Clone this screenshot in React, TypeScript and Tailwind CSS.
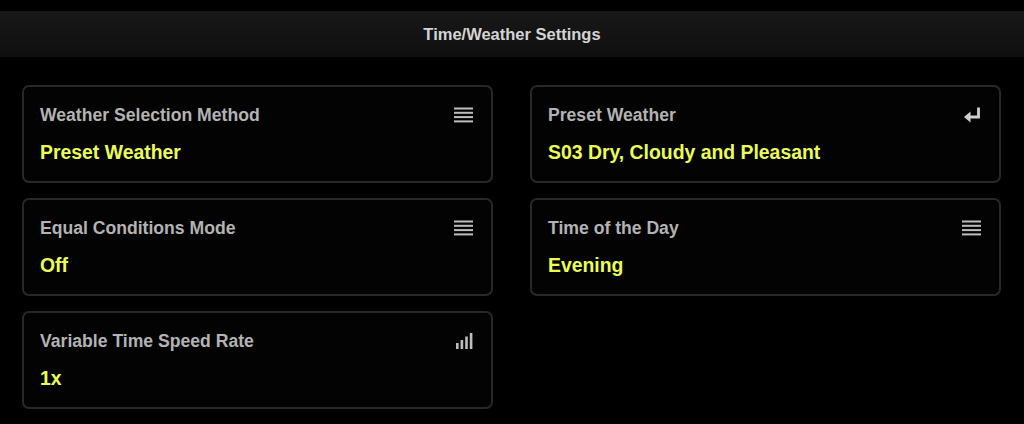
import type { ReactNode } from 'react'

type Icon = 'list' | 'enter' | 'bars'

const ROWS: { label: string; value: string; icon: Icon }[] = [
  { label: 'Weather Selection Method', value: 'Preset Weather', icon: 'list' },
  { label: 'Preset Weather', value: 'S03 Dry, Cloudy and Pleasant', icon: 'enter' },
  { label: 'Equal Conditions Mode', value: 'Off', icon: 'list' },
  { label: 'Time of the Day', value: 'Evening', icon: 'list' },
  { label: 'Variable Time Speed Rate', value: '1x', icon: 'bars' },
]

function ListIcon() {
  return (
    <svg width="19" height="16" viewBox="0 0 19 16" fill="#bdbdbd">
      <rect x="0" y="0.5" width="19" height="2" />
      <rect x="0" y="4.8" width="19" height="2" />
      <rect x="0" y="9.1" width="19" height="2" />
      <rect x="0" y="13.4" width="19" height="2" />
    </svg>
  )
}

function EnterIcon() {
  return (
    <svg width="17" height="16" viewBox="0 0 17 16" fill="none">
      <path d="M14.5 0.5 V10 H4" stroke="#cfcfcf" strokeWidth="2.8" />
      <path d="M0 10 L6.5 4.5 V15.5 Z" fill="#cfcfcf" />
    </svg>
  )
}

function BarsIcon() {
  return (
    <svg width="17" height="16" viewBox="0 0 17 16" fill="#bdbdbd">
      <rect x="0" y="10" width="2.6" height="6" />
      <rect x="4.6" y="7" width="2.6" height="9" />
      <rect x="9.2" y="3.5" width="2.6" height="12.5" />
      <rect x="13.8" y="0" width="2.6" height="16" />
    </svg>
  )
}

const ICONS: Record<Icon, () => ReactNode> = {
  list: ListIcon,
  enter: EnterIcon,
  bars: BarsIcon,
}

function SettingCard({ label, value, icon }: { label: string; value: string; icon: Icon }) {
  const Glyph = ICONS[icon]
  return (
    <div className="h-[98px] rounded-[7px] border-2 border-[#282828] bg-[#030303] pl-[16px] pr-[18px] pt-[17px]">
      <div className="flex items-start justify-between">
        <span className="text-[17.6px] leading-[22px] font-bold text-[#b3b3b3]">{label}</span>
        <span className="mt-[3px]">
          <Glyph />
        </span>
      </div>
      <div className="mt-[15px] text-[19.4px] leading-[22px] font-bold text-[#ebff52]">{value}</div>
    </div>
  )
}

export default function App() {
  return (
    <div
      className="h-[424px] w-[1024px] overflow-hidden bg-black"
      style={{ fontFamily: '"Liberation Sans", Arial, sans-serif' }}
    >
      <div className="pt-[11px]">
        <div className="flex h-[46px] items-center justify-center bg-gradient-to-b from-[#181818] to-[#0f0f0f]">
          <h1 className="text-[16.5px] font-bold text-[#d4d4d4]">Time/Weather Settings</h1>
        </div>
      </div>

      <div className="mt-[28px] grid grid-cols-2 gap-x-[37px] gap-y-[15px] pl-[22px] pr-[23px]">
        {ROWS.map((r) => (
          <SettingCard key={r.label} {...r} />
        ))}
      </div>
    </div>
  )
}
